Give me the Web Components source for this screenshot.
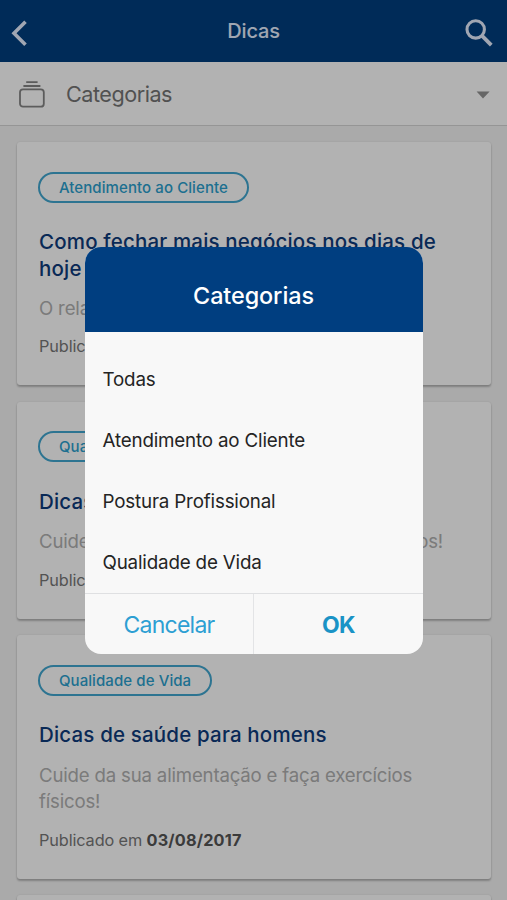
<!DOCTYPE html>
<html lang="pt-BR">
<head>
<meta charset="utf-8">
<title>Dicas</title>
<style>
html,body{margin:0;height:100%;overflow:hidden}
body{background:#f4f4f4;font-family:Inter,Roboto,"Liberation Sans",sans-serif}
</style>
</head>
<body>
<tips-page></tips-page>
<script>
const define=(name,html)=>customElements.define(name,class extends HTMLElement{
  constructor(){super();this.attachShadow({mode:'open'}).innerHTML=html;}
});

define('nav-bar',`<style>
:host{display:grid;grid-template-columns:60px 1fr 60px;align-items:center;height:62px;background:#003e7e;color:#fff;box-sizing:border-box}
h1{margin:0;font-size:20px;line-height:24px;font-weight:500;letter-spacing:-.17px;text-align:center;color:#e6eeff}
svg{display:block;fill:none;stroke:#e6eeff;margin-top:4px}
.s{justify-self:end}
</style>
<svg width="40" height="40" viewBox="0 0 40 40" stroke-width="3.6"><path d="M25.5 8.8 14 20.2 25.5 31.8"/></svg>
<h1><slot></slot></h1>
<svg class="s" width="60" height="40" viewBox="0 0 60 40" stroke-width="3.1"><circle cx="28.7" cy="16.4" r="8.7"/><path d="M34.6 22.4 44.3 32.2" stroke-width="3.8"/></svg>`);

define('category-select',`<style>
:host{display:flex;align-items:center;height:64px;padding:0 17px 0 18px;box-sizing:border-box;background:#fff;border-bottom:1px solid #d6d6d6;color:#757575}
span{flex:1;margin-left:20px;font-size:21.6px;line-height:26px;letter-spacing:-.48px}
svg{display:block;margin-top:2px}
</style>
<svg width="28" height="30" viewBox="0 0 28 30" fill="none" stroke="#858585" stroke-width="1.8"><rect x="2" y="9.3" width="23.8" height="17.4" rx="3"/><path d="M5.4 6h17M8.2 2.2h11.4"/></svg>
<span><slot></slot></span>
<svg width="14" height="8" viewBox="0 0 14 8"><path d="M.6.4h13L7 7.4z" fill="#929292"/></svg>`);

define('tag-pill',`<style>
:host{display:inline-flex;align-items:center;height:31px;box-sizing:border-box;border:2px solid #41a7d0;border-radius:16px;padding:0 18.6px;margin-left:-.7px;color:#2b9fce;font-size:15px;font-weight:500;letter-spacing:.09px;white-space:nowrap}
:host([wide]){min-width:172px}
</style><slot></slot>`);

define('tip-card',`<style>
:host{display:block;flex:none;box-sizing:border-box;margin:0 16px 0 17px;padding:29.5px 22px 28px;background:#fff;border-radius:3px;box-shadow:0 2px 2px rgba(0,0,0,.24),0 0 2px rgba(0,0,0,.12)}
.tag{display:flex}
h2{margin:26.5px 0 0;font-size:20.5px;line-height:26.5px;font-weight:500;letter-spacing:.17px;color:#0e3b7c}
.d{margin:12.8px 0 0;font-size:18.6px;line-height:26.5px;letter-spacing:-.17px;color:#b0b0b0}
.p{margin:14.2px 0 0;font-size:16.3px;line-height:22px;letter-spacing:-.12px;color:#777}
::slotted(b){font-weight:700;letter-spacing:.15px;color:#555}
::slotted(.split){display:flex;justify-content:space-between;padding-right:26px}
</style>
<div class="tag"><slot name="tag"></slot></div>
<h2><slot name="title"></slot></h2>
<div class="d"><slot name="desc"></slot></div>
<div class="p"><slot name="date"></slot></div>`);

define('select-option',`<style>
:host{display:flex;align-items:center;height:61.1px;padding-left:18px;color:#242424;font-size:18.8px;letter-spacing:-.18px}
</style><slot></slot>`);

define('select-dialog',`<style>
:host{display:flex;flex-direction:column;width:338px;height:407px;border-radius:16px;overflow:hidden;background:#f8f8f8}
header{display:flex;align-items:center;justify-content:center;height:84.5px;flex:none;padding-top:12px;box-sizing:border-box;background:#003e80;color:#fff;font-size:23.4px;font-weight:500;letter-spacing:-.08px}
main{flex:1;padding-top:17.5px;box-sizing:border-box;min-height:0}
footer{display:grid;grid-template-columns:1fr 1fr;height:61px;border-top:1px solid #dfe0e2;flex:none;box-sizing:border-box}
footer div{display:flex;align-items:center;justify-content:center;padding-top:1px;font-size:23px;color:#2d9fd3;letter-spacing:-.75px}
footer div+div{border-left:1px solid #e3e4e6;margin-left:-1px;padding-left:1px;font-weight:700;letter-spacing:-.6px;color:#1a93c6}
</style>
<header><slot name="title"></slot></header>
<main><slot></slot></main>
<footer><div>Cancelar</div><div>OK</div></footer>`);

define('tips-page',`<style>
:host{display:block;position:relative;height:900px;overflow:hidden}
.list{display:flex;flex-direction:column;gap:16.5px;padding-top:16px}
.veil{position:absolute;inset:0;background:rgba(0,0,0,.3);display:flex;justify-content:center;align-items:flex-start;padding-top:247px;box-sizing:border-box}
</style>
<nav-bar>Dicas</nav-bar>
<category-select>Categorias</category-select>
<div class="list">
<tip-card><tag-pill slot="tag">Atendimento ao Cliente</tag-pill><span slot="title">Como fechar mais negócios nos dias de hoje</span><span slot="desc">O rela</span><span slot="date">Public</span></tip-card>
<tip-card><tag-pill slot="tag" wide>Qua</tag-pill><span slot="title">Dicas</span><div slot="desc" class="split"><span>Cuide</span><span>os!</span></div><span slot="date">Public</span></tip-card>
<tip-card><tag-pill slot="tag">Qualidade de Vida</tag-pill><span slot="title">Dicas de saúde para homens</span><span slot="desc">Cuide da sua alimentação e faça exercícios físicos!</span><span slot="date">Publicado em </span><b slot="date">03/08/2017</b></tip-card>
<tip-card></tip-card>
</div>
<div class="veil"><select-dialog><span slot="title">Categorias</span>
<select-option>Todas</select-option><select-option>Atendimento ao Cliente</select-option><select-option>Postura Profissional</select-option><select-option>Qualidade de Vida</select-option>
</select-dialog></div>`);
</script>
</body>
</html>
